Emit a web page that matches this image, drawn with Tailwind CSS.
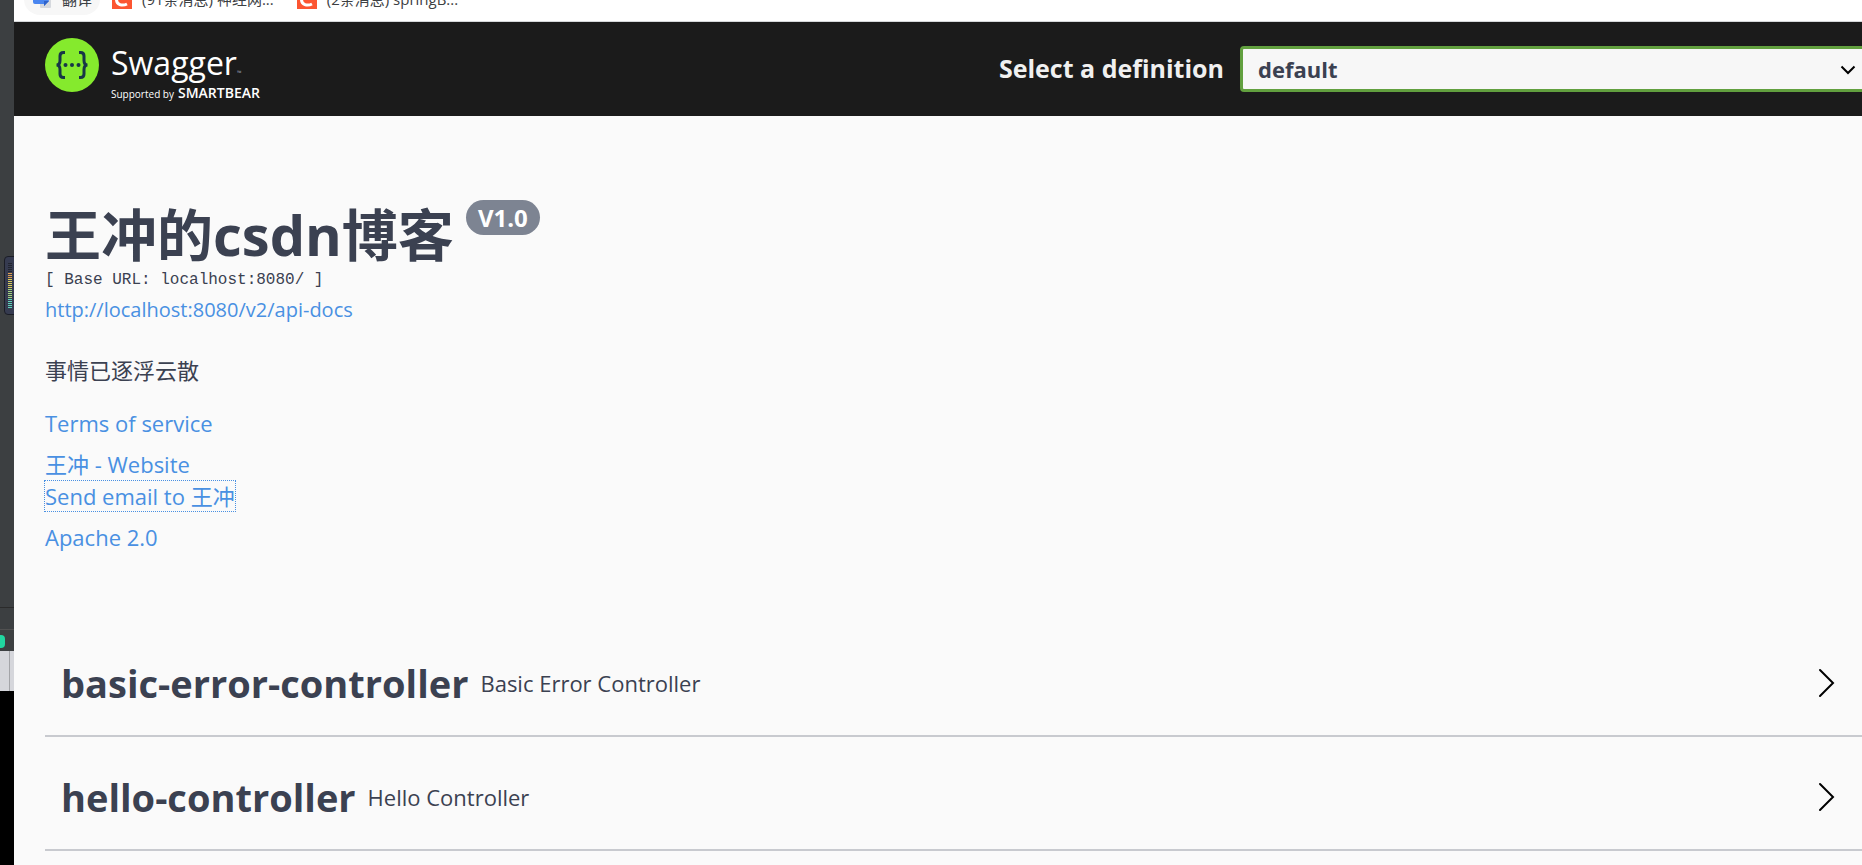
<!DOCTYPE html>
<html lang="zh-CN">
<head>
    <meta charset="UTF-8">
    <meta name="viewport" content="width=device-width, initial-scale=1.0">
    <title>Swagger UI</title>
    <script src="https://cdn.jsdelivr.net/npm/@tailwindcss/browser@4"></script>
</head>
<body class="flex h-screen overflow-hidden bg-[#fafafa] font-['Open_Sans','Noto_Sans_CJK_SC',sans-serif] text-[#3b4151]">
    <!-- window edge behind the browser -->
    <aside class="relative flex w-[14px] shrink-0 flex-col overflow-hidden bg-black">
        <div class="h-[608px] border-b border-[#2b2b2b] bg-[#3c3f41]"></div>
        <div class="h-[22px] border-b border-[#515151] bg-[#3c3f41]"></div>
        <div class="h-[21px] bg-[#3c3f41] pt-[5px]">
            <div class="h-[13px] w-[5px] rounded-r-sm bg-[#21d6a0]"></div>
        </div>
        <div class="h-10 w-[10px] border-r border-[#a3a4a8] bg-[#d5d6db] shadow-[4px_0_0_#d5d6db]"></div>
        <div class="absolute top-[256px] left-1 h-[59px] w-4 rounded border border-[#1b1d26] bg-[#363b50]">
            <svg class="mt-[6px] ml-[3px]" width="4" height="46" viewBox="0 0 4 46" fill="none" stroke-width="4">
                <path d="M2 0v10" stroke="#22252f" stroke-dasharray="1 1"/>
                <path d="M2 10v6" stroke="#e0a04f" stroke-dasharray="1 1"/>
                <path d="M2 16v10" stroke="#d9cd5c" stroke-dasharray="1 1"/>
                <path d="M2 26v10" stroke="#a3d47f" stroke-dasharray="1 1"/>
                <path d="M2 36v10" stroke="#5fd3bb" stroke-dasharray="1 1"/>
            </svg>
        </div>
    </aside>

    <div class="min-w-0 flex-1 overflow-hidden">
        <!-- bookmarks bar -->
        <nav class="flex h-[22px] items-end gap-[3px] overflow-hidden border-b border-[#d5d7d9] bg-white pb-[6px] pl-[10px] text-[15px] text-[#3c4043]">
            <a href="#" class="flex h-8 items-center gap-[10px] rounded-full bg-[#f7f7f7] px-2">
                <svg width="20" height="20" viewBox="0 0 20 20">
                    <rect x="8" y="6" width="11" height="13" rx="1" fill="#d6d9de"/>
                    <path d="M1 1h13l3 11-5 5v-2H3a2 2 0 0 1-2-2z" fill="#4a86f0"/>
                    <path d="M12 12h5l-5 5z" fill="#2f62c9"/>
                    <path d="M4 8h5M6.500 6v2" stroke="#fff" stroke-width="2"/>
                </svg>
                <span>翻译</span>
            </a>
            <a href="#" class="flex h-8 items-center gap-[10px] pr-3 pl-[9px]">
                <svg width="20" height="20" viewBox="0 0 20 20">
                    <rect width="20" height="20" fill="#fc5531"/>
                    <path d="M15.500 6C9 2.500 4.500 6 4.500 10.500c0 5 5.500 7 10.500 4.500" fill="none" stroke="#fff" stroke-width="3"/>
                </svg>
                <span>(91条消息) 神经网...</span>
            </a>
            <a href="#" class="flex h-8 items-center gap-[10px] px-2">
                <svg width="20" height="20" viewBox="0 0 20 20">
                    <rect width="20" height="20" fill="#fc5531"/>
                    <path d="M15.500 6C9 2.500 4.500 6 4.500 10.500c0 5 5.500 7 10.500 4.500" fill="none" stroke="#fff" stroke-width="3"/>
                </svg>
                <span>(2条消息) springB...</span>
            </a>
        </nav>

        <header class="flex h-[94px] items-center justify-between overflow-hidden bg-[#1b1b1b] pl-[31px]">
            <a href="#" class="flex gap-3 self-start pt-4 text-white">
                <svg width="54" height="54" viewBox="0 0 54 54">
                    <circle cx="27" cy="27" r="27" fill="#85ea2d"/>
                    <g fill="none" stroke="#173647" stroke-width="3">
                        <path d="M20 14.500h-1.500c-2.500 0-3.500 1-3.500 3.500v4.500c0 3-1 4.500-3.500 4.500 2.500 0 3.500 1.500 3.500 4.500V36c0 2.500 1 3.500 3.500 3.500H20"/>
                        <path d="M34 14.500h1.500c2.500 0 3.500 1 3.500 3.500v4.500c0 3 1 4.500 3.500 4.500-2.500 0-3.500 1.500-3.500 4.500V36c0 2.500-1 3.500-3.500 3.500H34"/>
                    </g>
                    <g fill="#173647">
                        <circle cx="20.500" cy="27" r="2"/>
                        <circle cx="27" cy="27" r="2"/>
                        <circle cx="33.500" cy="27" r="2"/>
                    </g>
                </svg>
                <span class="flex flex-col pt-3">
                    <span class="text-[32px] leading-[26px]">Swagger<span class="text-[6px] text-gray-400">™</span></span>
                    <span class="flex items-baseline gap-1 text-[10px] leading-[14px]">Supported by <b class="text-[14px] font-semibold">SMARTBEAR</b></span>
                </span>
            </a>
            <form class="-mr-2 flex w-[47%] items-center justify-end gap-4">
                <label for="definition" class="shrink-0 text-[25px] font-bold text-[#f0f0f0]">Select a definition</label>
                <span class="relative w-[630px] shrink-0">
                    <select id="definition" class="block h-[46px] w-full appearance-none rounded border-[3px] border-[#62a03f] bg-[#f7f7f7] px-[15px] text-[22px] font-bold text-[#3b4151]">
                        <option>default</option>
                    </select>
                    <svg class="pointer-events-none absolute top-4 right-[14px]" width="16" height="16" viewBox="0 0 16 16" fill="none" stroke="#000" stroke-width="2">
                        <path d="M1.500 4.500 8 11l6.500-6.500"/>
                    </svg>
                </span>
            </form>
        </header>

        <main class="pl-[31px]">
            <section class="pt-[86px] text-[22px] leading-8">
                <h1 class="flex items-start gap-3 text-[56px] leading-[64px] font-bold">
                    王冲的csdn博客
                    <span class="-mt-[2px] rounded-full bg-[#7d8492] px-3 text-[24px] leading-[35px] text-white">V1.0</span>
                </h1>
                <p class="font-['Liberation_Mono',monospace] text-[16px] leading-7">[ Base URL: localhost:8080/ ]</p>
                <a href="#" class="block text-[20px] text-[#4990e2]">http://localhost:8080/v2/api-docs</a>
                <p class="mt-7">事情已逐浮云散</p>
                <div class="mt-[21px] flex flex-col items-start gap-[9px] text-[#4990e2]">
                    <a href="#">Terms of service</a>
                    <div class="flex flex-col items-start">
                        <a href="#">王冲 - Website</a>
                        <a href="#" class="-ml-px border border-dotted border-[#4990e2] leading-[30px]">Send email to 王冲</a>
                    </div>
                    <a href="#">Apache 2.0</a>
                </div>
            </section>

            <section class="mt-[70px]">
                <div class="flex h-[114px] items-center border-b-2 border-[#c8cacf] pt-2 pr-[27px] pl-4">
                    <h2 class="text-[38px] font-bold">basic-error-controller</h2>
                    <small class="ml-3 text-[22px]">Basic Error Controller</small>
                    <button type="button" aria-label="Expand basic-error-controller" class="ml-auto">
                        <svg width="18" height="30" viewBox="0 0 18 30" fill="none" stroke="#000" stroke-width="2" stroke-linecap="round">
                            <path d="m3 2 13 13L3 28"/>
                        </svg>
                    </button>
                </div>
                <div class="flex h-[114px] items-center border-b-2 border-[#c8cacf] pt-2 pr-[27px] pl-4">
                    <h2 class="text-[38px] font-bold">hello-controller</h2>
                    <small class="ml-3 text-[22px]">Hello Controller</small>
                    <button type="button" aria-label="Expand hello-controller" class="ml-auto">
                        <svg width="18" height="30" viewBox="0 0 18 30" fill="none" stroke="#000" stroke-width="2" stroke-linecap="round">
                            <path d="m3 2 13 13L3 28"/>
                        </svg>
                    </button>
                </div>
            </section>
        </main>
    </div>
</body>
</html>
